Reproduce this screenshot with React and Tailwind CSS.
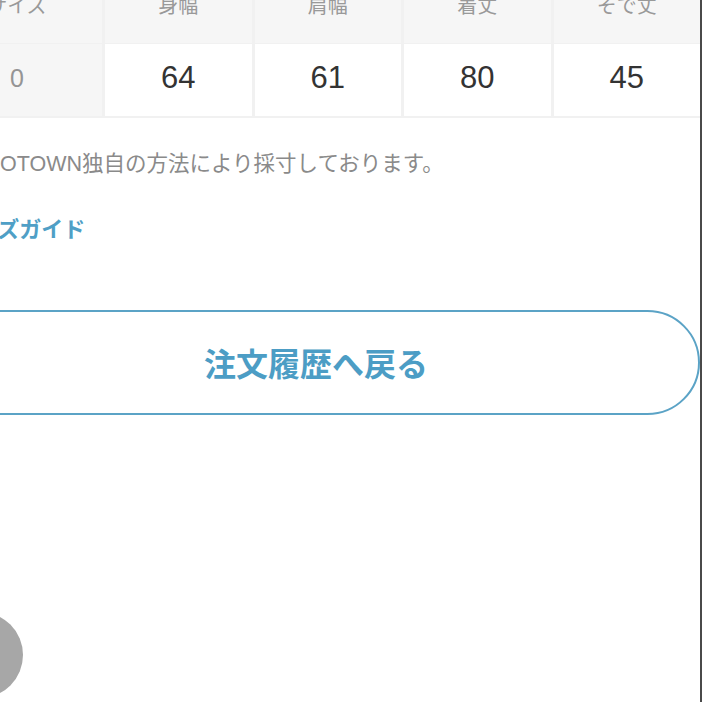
import React from "react";

const font = { fontFamily: '"Noto Sans CJK JP", "Noto Sans", sans-serif' };
const latin = { fontFamily: '"Liberation Sans", "Noto Sans CJK JP", sans-serif' };

export default function App() {
  const heads = ["身幅", "肩幅", "着丈", "そで丈"];
  const vals = ["64", "61", "80", "45"];
  return (
    <div className="relative flex h-[702px] w-[702px] overflow-hidden bg-white" style={font}>
      <div className="h-full w-[700px] overflow-hidden">
        <div className="ml-[-68px] mt-[-29px] w-[768px]">
          <div className="grid grid-cols-[170px_repeat(4,1fr)] gap-x-[3px] gap-y-[1px] bg-[#f1f1f1] pb-[2px]">
            <div className="flex h-[72px] items-center justify-center bg-[#f6f6f6] pb-[5px] text-[20px] text-[#999]">サイズ</div>
            {heads.map((h) => (
              <div key={h} className="flex h-[72px] items-center justify-center bg-[#f6f6f6] pb-[5px] text-[20px] text-[#999]">{h}</div>
            ))}
            <div className="flex h-[72px] items-center justify-center bg-[#f6f6f6] pb-[2px] text-[25px] text-[#959595]" style={latin}>0</div>
            {vals.map((v, i) => (
              <div key={i} className="flex h-[72px] items-center justify-center bg-white pb-[4px] text-[31px] text-[#333]" style={latin}>{v}</div>
            ))}
          </div>
          <p className="mt-[31px] pl-[25px] text-[21.5px] leading-[30px] text-[#8a8a8a]" style={latin}>ZOZOTOWN独自の方法により採寸しております。</p>
          <p className="mt-[33px] pl-[22px] text-[22px] font-bold leading-[30px] text-[#4f9fc6]">サイズガイド</p>
          <div className="mt-[68px] flex h-[105px] items-center justify-center rounded-full border-2 border-[#5ba3c6] pb-[2px] text-[32px] font-bold text-[#4c9dc5]">
            注文履歴へ戻る
          </div>
        </div>
      </div>
      <div className="h-full w-[2px] bg-[#4a4a4a]" />
      <div className="absolute left-[-63px] top-[612px] h-[86px] w-[86px] rounded-full bg-[#a7a7a7]" />
    </div>
  );
}
